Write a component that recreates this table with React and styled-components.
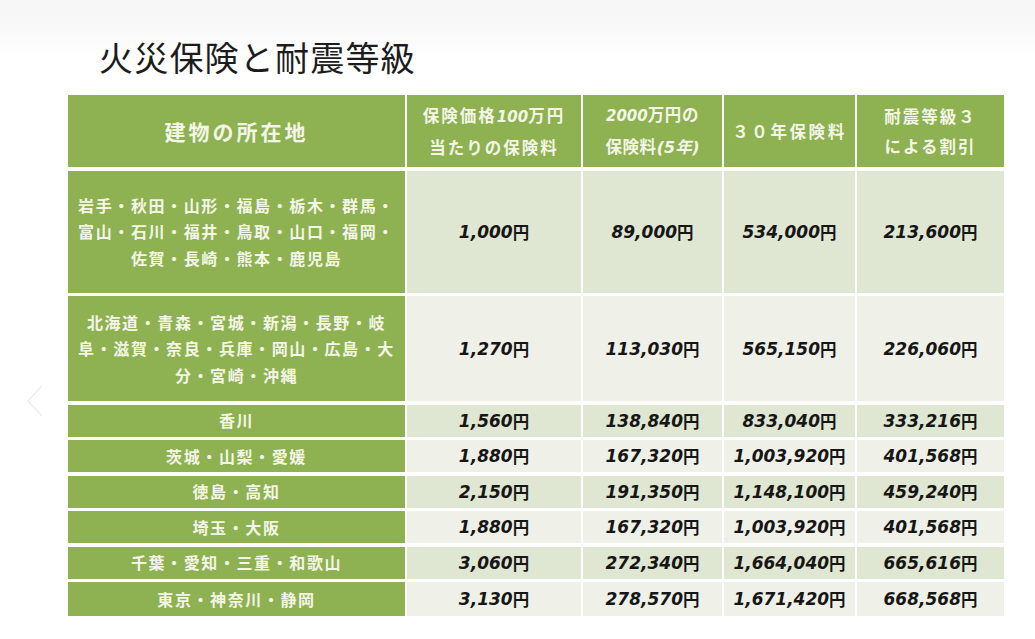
import React from 'react'
import styled, { createGlobalStyle } from 'styled-components'

const rows = [
  {
    place: ['岩手・秋田・山形・福島・栃木・群馬・', '富山・石川・福井・鳥取・山口・福岡・', '佐賀・長崎・熊本・鹿児島'],
    values: ['1,000', '89,000', '534,000', '213,600'],
  },
  {
    place: ['北海道・青森・宮城・新潟・長野・岐', '阜・滋賀・奈良・兵庫・岡山・広島・大', '分・宮崎・沖縄'],
    values: ['1,270', '113,030', '565,150', '226,060'],
  },
  { place: ['香川'], values: ['1,560', '138,840', '833,040', '333,216'] },
  { place: ['茨城・山梨・愛媛'], values: ['1,880', '167,320', '1,003,920', '401,568'] },
  { place: ['徳島・高知'], values: ['2,150', '191,350', '1,148,100', '459,240'] },
  { place: ['埼玉・大阪'], values: ['1,880', '167,320', '1,003,920', '401,568'] },
  { place: ['千葉・愛知・三重・和歌山'], values: ['3,060', '272,340', '1,664,040', '665,616'] },
  { place: ['東京・神奈川・静岡'], values: ['3,130', '278,570', '1,671,420', '668,568'] },
]

function App() {
  return (
    <>
      <GlobalStyle />
      <Page>
        <Chevron width="22" height="34" viewBox="0 0 22 34">
          <polyline points="18,2 4,17 18,32" />
        </Chevron>
        <Title>火災保険と耐震等級</Title>
        <Table>
          <HeadCell $big>建物の所在地</HeadCell>
          <HeadCell>
            <span>保険価格<Latin>100</Latin>万円</span>
            <span>当たりの保険料</span>
          </HeadCell>
          <HeadCell $tight>
            <span><Latin>2000</Latin>万円の</span>
            <span>保険料<Slant><Latin $full>(5</Latin>年<Latin $full>)</Latin></Slant></span>
          </HeadCell>
          <HeadCell $wide>３０年保険料</HeadCell>
          <HeadCell>
            <span>耐震等級３</span>
            <span>による割引</span>
          </HeadCell>

          {rows.map((row, i) => (
            <React.Fragment key={i}>
              <PlaceCell>
                {row.place.map((line) => (
                  <span key={line}>{line}</span>
                ))}
              </PlaceCell>
              {row.values.map((v, j) => (
                <ValueCell key={j} $tint={i % 2 === 0}>
                  {v}<Yen>円</Yen>
                </ValueCell>
              ))}
            </React.Fragment>
          ))}
        </Table>
      </Page>
    </>
  )
}

export default App

const GlobalStyle = createGlobalStyle`
  html, body {
    margin: 0;
    padding: 0;
  }
  body {
    background: #ffffff;
    font-family: "Noto Sans CJK JP", "Noto Sans", sans-serif;
  }
`

const Page = styled.div`
  position: relative;
  height: 639px;
  overflow: hidden;
  padding-left: 68px;
  box-sizing: border-box;
  background: linear-gradient(#f6f6f6 0px, #f9f9f9 30px, #ffffff 58px);
`

const Chevron = styled.svg`
  position: absolute;
  left: 24px;
  top: 384px;
  fill: none;
  stroke: #ededed;
  stroke-width: 1.5;
`

const Title = styled.h1`
  margin: 0 0 18px 31px;
  padding-top: 37px;
  font-family: "Noto Sans CJK JP", sans-serif;
  font-size: 34px;
  font-weight: 400;
  line-height: 40px;
  letter-spacing: 1.2px;
  color: #1c1c1c;
`

const Table = styled.div`
  display: grid;
  grid-template-columns: 337px 174px 139px 131px 147px;
  grid-template-rows: 72px 122px 105px repeat(5, 32px) 34px;
  column-gap: 2px;
  row-gap: 3.5px;
  width: max-content;
`

const HeadCell = styled.div`
  background: #8eb152;
  color: #f3f6e6;
  display: flex;
  flex-direction: column;
  align-items: center;
  justify-content: center;
  font-weight: 700;
  font-size: ${(p) => (p.$big ? '21px' : '16.5px')};
  letter-spacing: ${(p) => (p.$big ? '3px' : p.$wide ? '2.6px' : p.$tight ? '0.6px' : '2px')};
  line-height: 30px;
  white-space: nowrap;
`

const Slant = styled.span`
  font-style: italic;
`

const Latin = styled.span`
  font-family: "DejaVu Sans", sans-serif;
  font-style: italic;
  font-weight: 700;
  font-size: ${(p) => (p.$full ? '16px' : '15px')};
  letter-spacing: 0;
`

const PlaceCell = styled.div`
  background: #8eb152;
  color: #f3f6e6;
  display: flex;
  flex-direction: column;
  align-items: center;
  justify-content: center;
  font-weight: 700;
  font-size: 16px;
  letter-spacing: 1.6px;
  line-height: 26.5px;
  white-space: nowrap;
`

const ValueCell = styled.div`
  background: ${(p) => (p.$tint ? '#dfe6d1' : '#eff1e8')};
  color: #161616;
  display: flex;
  align-items: center;
  justify-content: center;
  font-family: "DejaVu Sans", sans-serif;
  font-style: italic;
  font-weight: 700;
  font-size: 17px;
  white-space: nowrap;
`

const Yen = styled.span`
  font-family: "Noto Sans CJK JP", sans-serif;
  font-style: normal;
  font-weight: 700;
  font-size: 16.5px;
`
